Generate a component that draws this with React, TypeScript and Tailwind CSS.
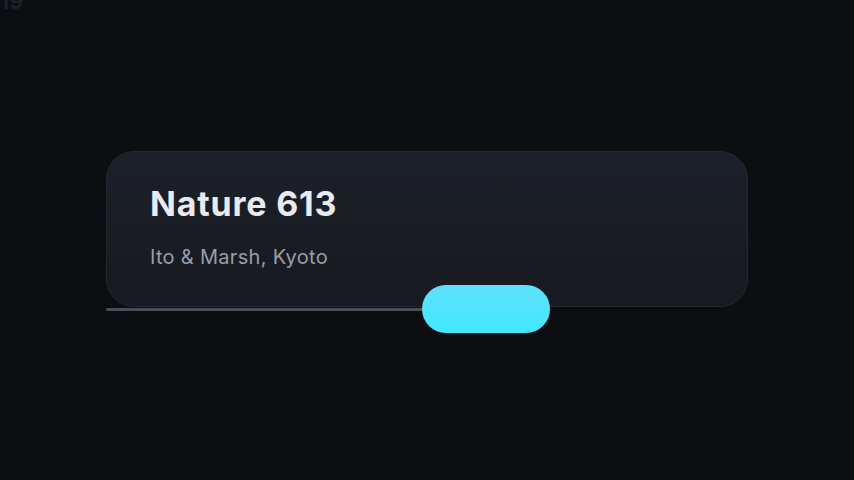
export default function App() {
  return (
    <div className="relative w-[854px] h-[480px] overflow-hidden bg-[#0d0e12] font-['Inter',sans-serif]">
      {/* frame counter, mostly off the top edge */}
      <div className="absolute left-[0px] top-[-14px] text-[21px] font-bold tracking-[0.5px] text-[#1d2026]">19</div>

      <div className="ml-[106px] pt-[151px] w-[642px]">
        {/* Track card */}
        <div className="h-[156px] rounded-[28px] border border-[#23272e] bg-gradient-to-b from-[#1c2028] to-[#171a20] pl-[43px] pt-[30px]">
          <h1 className="text-[34px] font-bold leading-[44px] tracking-[0.8px] text-[#e8eaf0]">Nature 613</h1>
          <p className="mt-[19px] text-[20px] leading-[24px] tracking-[0.3px] text-[#9a9ea8]">Ito &amp; Marsh, Kyoto</p>
        </div>

        {/* Progress bar */}
        <div className="relative mt-[1px] h-[3px]">
          <div className="h-[3px] w-[324px] rounded-full bg-[#4a4d55]" />
          <div className="absolute left-[316px] top-[-23px] h-[48px] w-[128px] rounded-full bg-gradient-to-b from-[#5ee0fb] to-[#3ee8ff]" />
        </div>
      </div>
    </div>
  );
}
